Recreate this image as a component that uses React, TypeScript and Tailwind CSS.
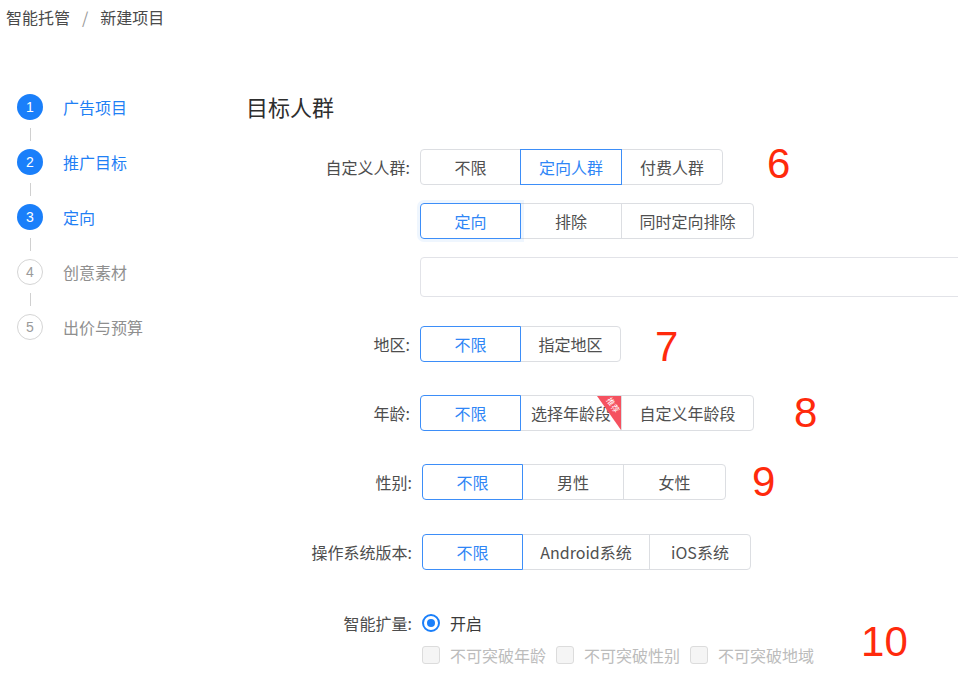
import React from "react";

const FONT = { fontFamily: '"Noto Sans CJK SC", "Noto Sans", sans-serif' };
const NUM = { fontFamily: '"Liberation Sans", Arial, sans-serif' };

type Opt = { label: string; w: number; sel?: boolean; ribbon?: boolean; glow?: boolean };

function Group({ opts }: { opts: Opt[] }) {
  return (
    <div className="flex">
      {opts.map((o, i) => {
        const first = i === 0;
        const last = i === opts.length - 1;
        return (
          <div
            key={o.label}
            style={{ width: o.w }}
            className={
              "relative flex h-[36px] items-center justify-center overflow-hidden border text-[16px] " +
              (first ? "rounded-l-[4px] " : "-ml-px ") +
              (last ? "rounded-r-[4px] " : "") +
              (o.sel
                ? "z-10 border-[#3d8ef8] text-[#2f86f6] "
                : "border-[#dcdee2] text-[#505050] ") +
              (o.glow ? "shadow-[0_0_0_3px_rgba(45,140,240,0.08)] " : "")
            }
          >
            {o.label}
            {o.ribbon && (
              <div className="absolute right-0 top-0 h-[34px] w-[24px] bg-[#f5515f] [clip-path:polygon(0_0,100%_0,100%_100%)]">
                <span className="absolute right-[0px] top-[5px] rotate-[56deg] text-[8px] leading-none text-white">
                  推荐
                </span>
              </div>
            )}
          </div>
        );
      })}
    </div>
  );
}

function Row({
  label,
  shift,
  children,
}: {
  label: string;
  shift?: boolean;
  children: React.ReactNode;
}) {
  return (
    <div className="flex h-[36px] items-center">
      <div
        className={
          "shrink-0 pr-[10px] text-right text-[16px] text-[#4d4d4d] " +
          (shift ? "w-[176px]" : "w-[174px]")
        }
      >
        {label}
      </div>
      {children}
    </div>
  );
}

function Red({ children, className }: { children: React.ReactNode; className: string }) {
  return (
    <span
      style={NUM}
      className={"block h-[36px] text-[42px] leading-[36px] text-[#ff2a0c] " + className}
    >
      {children}
    </span>
  );
}

const steps = [
  { n: 1, t: "广告项目", done: true },
  { n: 2, t: "推广目标", done: true },
  { n: 3, t: "定向", done: true },
  { n: 4, t: "创意素材", done: false },
  { n: 5, t: "出价与预算", done: false },
];

function Checkbox({ label }: { label: string }) {
  return (
    <div className="flex items-center">
      <div className="h-[18px] w-[18px] rounded-[3px] border border-[#dcdcdc] bg-[#f5f5f5]" />
      <span className="ml-[10px] text-[16px] text-[#bcbcbc]">{label}</span>
    </div>
  );
}

export default function App() {
  return (
    <div style={FONT} className="relative h-[683px] w-[958px] overflow-hidden bg-white">
      <div className="flex h-[34px] items-center pl-[6px] text-[16px] text-[#4a4a4a]">
        <span>智能托管</span>
        <span className="mx-[12px] text-[#999]">/</span>
        <span>新建项目</span>
      </div>

      <div className="mt-[60px] flex">
        <div className="w-[246px] shrink-0 pl-[17px]">
          {steps.map((s, i) => (
            <div key={s.n}>
              <div className="flex h-[26px] items-center">
                <div
                  className={
                    "flex h-[26px] w-[26px] items-center justify-center rounded-full text-[14px] " +
                    (s.done
                      ? "bg-[#1a7ffa] text-white"
                      : "border border-[#d5d5d5] text-[#9a9a9a]")
                  }
                  style={NUM}
                >
                  {s.n}
                </div>
                <span
                  className={
                    "ml-[20px] text-[16px] " + (s.done ? "text-[#1f80f5]" : "text-[#8f8f8f]")
                  }
                >
                  {s.t}
                </span>
              </div>
              {i < steps.length - 1 && (
                <div className="flex h-[29px] w-[26px] items-center justify-center">
                  <div className="h-[13px] w-px bg-[#d0d0d0]" />
                </div>
              )}
            </div>
          ))}
        </div>

        <div className="flex flex-col">
          <div className="-mt-[2px] h-[28px] text-[22px] leading-[28px] text-[#2e2e2e]">
            目标人群
          </div>
          <div className="mt-[29px]">
            <Row label="自定义人群:">
              <Group
                opts={[
                  { label: "不限", w: 101 },
                  { label: "定向人群", w: 102, sel: true },
                  { label: "付费人群", w: 102 },
                ]}
              />
              <Red className="ml-[44px] -translate-y-[3px]">6</Red>
            </Row>
          </div>
          <div className="mt-[18px] pl-[174px]">
            <Group
              opts={[
                { label: "定向", w: 101, sel: true, glow: true },
                { label: "排除", w: 102 },
                { label: "同时定向排除", w: 133 },
              ]}
            />
          </div>
          <div className="mt-[18px] pl-[174px]">
            <div className="h-[40px] w-[560px] rounded-[4px] border border-[#e2e3e8]" />
          </div>
          <div className="mt-[29px]">
            <Row label="地区:">
              <Group
                opts={[
                  { label: "不限", w: 101, sel: true },
                  { label: "指定地区", w: 101 },
                ]}
              />
              <Red className="ml-[34px] translate-y-[3px]">7</Red>
            </Row>
          </div>
          <div className="mt-[33px]">
            <Row label="年龄:">
              <Group
                opts={[
                  { label: "不限", w: 101, sel: true },
                  { label: "选择年龄段", w: 102, ribbon: true },
                  { label: "自定义年龄段", w: 133 },
                ]}
              />
              <Red className="ml-[40px]">8</Red>
            </Row>
          </div>
          <div className="mt-[33px]">
            <Row label="性别:" shift>
              <Group
                opts={[
                  { label: "不限", w: 101, sel: true },
                  { label: "男性", w: 102 },
                  { label: "女性", w: 103 },
                ]}
              />
              <Red className="ml-[26px]">9</Red>
            </Row>
          </div>
          <div className="mt-[34px]">
            <Row label="操作系统版本:" shift>
              <Group
                opts={[
                  { label: "不限", w: 101, sel: true },
                  { label: "Android系统", w: 128 },
                  { label: "iOS系统", w: 102 },
                ]}
              />
            </Row>
          </div>
          <div className="mt-[35px] flex items-center">
            <div className="flex flex-col">
              <Row label="智能扩量:" shift>
                <div className="flex h-[22px] items-center">
                  <div className="flex h-[18px] w-[18px] items-center justify-center rounded-full border-2 border-[#1a7ffa]">
                    <div className="h-[8px] w-[8px] rounded-full bg-[#1a7ffa]" />
                  </div>
                  <span className="ml-[10px] text-[16px] text-[#3a3a3a]">开启</span>
                </div>
              </Row>
              <div className="mt-[3px] flex h-[22px] items-center gap-[10px] pl-[176px]">
                <Checkbox label="不可突破年龄" />
                <Checkbox label="不可突破性别" />
                <Checkbox label="不可突破地域" />
              </div>
            </div>
            <Red className="ml-[47px] translate-y-[6px]">10</Red>
          </div>
        </div>
      </div>
    </div>
  );
}
